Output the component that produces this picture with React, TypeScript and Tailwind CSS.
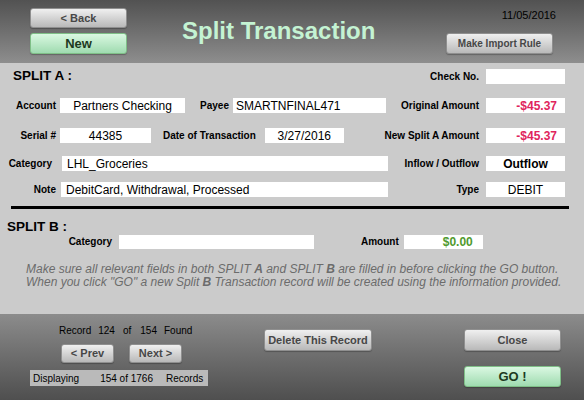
import React from "react";

const grayBtn =
  "flex items-center justify-center rounded-[3px] border border-[#8f8f8f] bg-gradient-to-b from-[#f0f0f0] to-[#b9b9b9] font-bold text-[#474747] shadow-[0_1px_1px_rgba(0,0,0,0.25)]";
const greenBtn =
  "flex items-center justify-center rounded-[3px] border border-[#7fbf87] bg-gradient-to-b from-[#daf8e2] to-[#9fdbb0] font-bold text-[#1d3a1f] shadow-[0_1px_1px_rgba(0,0,0,0.25)]";

const Label = ({ children, w, ml }: { children: React.ReactNode; w?: string; ml?: string }) => (
  <span className={`text-[10px] font-bold text-black whitespace-nowrap text-right ${w ?? ""} ${ml ?? ""}`}>
    {children}
  </span>
);

const Field = ({ className, children }: { className: string; children?: React.ReactNode }) => (
  <div className={`h-[15px] bg-white flex items-center text-[12px] leading-none whitespace-nowrap overflow-hidden ${className}`}>
    {children}
  </div>
);

const RightPair = ({ label, children, valueClass }: { label: string; children?: React.ReactNode; valueClass?: string }) => (
  <div className="ml-auto flex items-center">
    <Label>{label}</Label>
    <Field className={`ml-[7px] w-[79px] ${valueClass ?? "text-black"}`}>{children}</Field>
  </div>
);

export default function App() {
  return (
    <div className="w-[584px] h-[400px] flex flex-col font-['Liberation_Sans',Arial,Helvetica,sans-serif] overflow-hidden">
      {/* header */}
      <div className="h-[63px] flex bg-gradient-to-b from-[#525252] to-[#8e8e8e]">
        <div className="pl-[30px] pt-[8px] flex flex-col gap-[5px]">
          <button className={`${grayBtn} w-[97px] h-[20px] text-[11px]`}>&lt; Back</button>
          <button className={`${greenBtn} w-[97px] h-[21px] text-[13px]`}>New</button>
        </div>
        <div className="pl-[55px] pt-[17px] text-[24px] font-bold text-[#c4f3d3] leading-[28px] whitespace-nowrap">
          Split Transaction
        </div>
        <div className="ml-auto pr-[28px] pt-[8px] flex flex-col items-end">
          <div className="text-[11px] leading-[14px] text-black">11/05/2016</div>
          <button className={`${grayBtn} mt-[11px] mr-[3px] w-[107px] h-[21px] text-[10px]`}>Make Import Rule</button>
        </div>
      </div>

      {/* body */}
      <div className="h-[251px] bg-[#cbcbcb] flex flex-col pt-[6px]">
        <div className="h-[15px] flex items-center pr-[19px]">
          <span className="ml-[13px] text-[13.5px] font-bold text-black">SPLIT A :</span>
          <RightPair label="Check No." />
        </div>

        <div className="mt-[14px] h-[15px] flex items-center pr-[19px]">
          <Label w="w-[56px]">Account</Label>
          <Field className="ml-[4px] w-[125px] justify-center text-black">Partners Checking</Field>
          <Label w="w-[39px]" ml="ml-[5px]">Payee</Label>
          <Field className="ml-[4px] w-[153px] pl-[3px] text-black">SMARTNFINAL471</Field>
          <RightPair label="Original Amount" valueClass="justify-end pr-[8px] font-bold text-[#e0245c]">
            -$45.37
          </RightPair>
        </div>

        <div className="mt-[15px] h-[15px] flex items-center pr-[19px]">
          <Label w="w-[56px]">Serial #</Label>
          <Field className="ml-[4px] w-[91px] justify-center text-black">44385</Field>
          <Label ml="ml-[12px]">Date of Transaction</Label>
          <Field className="ml-[9px] w-[79px] justify-center text-black">3/27/2016</Field>
          <RightPair label="New Split A Amount" valueClass="justify-end pr-[8px] font-bold text-[#e0245c]">
            -$45.37
          </RightPair>
        </div>

        <div className="mt-[13px] h-[15px] flex items-center pr-[19px]">
          <Label w="w-[52px]">Category</Label>
          <Field className="ml-[10px] w-[326px] pl-[5px] text-black">LHL_Groceries</Field>
          <RightPair label="Inflow / Outflow" valueClass="justify-center font-bold text-[11.5px] text-black">
            Outflow
          </RightPair>
        </div>

        <div className="mt-[11px] h-[15px] flex items-center pr-[19px]">
          <Label w="w-[56px]">Note</Label>
          <Field className="ml-[5px] w-[327px] pl-[5px] text-black">DebitCard, Withdrawal, Processed</Field>
          <RightPair label="Type" valueClass="justify-center text-black">
            DEBIT
          </RightPair>
        </div>

        <div className="mt-[9px] ml-[11px] w-[558px] h-[2.5px] bg-black" />

        <div className="mt-[10px] ml-[7px] h-[16px] leading-[16px] text-[13.5px] font-bold text-black">SPLIT B :</div>
        <div className="h-[14px] flex items-center">
          <Label w="w-[112px]">Category</Label>
          <div className="ml-[7px] w-[195px] h-[14px] bg-white" />
          <Label ml="ml-[47px]">Amount</Label>
          <div className="ml-[5px] w-[79px] h-[14px] bg-white flex items-center justify-end pr-[10px] text-[12px] font-bold text-[#4f9a2e]">
            $0.00
          </div>
        </div>

        <div className="mt-[14px] pl-[26px] text-[12px] leading-[13px] italic text-[#6c6c6c] whitespace-nowrap">
          Make sure all relevant fields in both SPLIT <b>A</b> and SPLIT <b>B</b> are filled in before clicking the GO button.
          <br />
          When you click "GO" a new Split <b>B</b> Transaction record will be created using the information provided.
        </div>
      </div>

      {/* footer */}
      <div className="h-[86px] flex bg-gradient-to-b from-[#8c8c8c] to-[#4f4f4f]">
        <div className="pl-[30px] pt-[10px] flex flex-col w-[264px] shrink-0">
          <div className="h-[13px] flex items-center text-[10px] text-black whitespace-nowrap">
            <span className="ml-[29px]">Record</span>
            <span className="ml-[7px]">124</span>
            <span className="ml-[8px]">of</span>
            <span className="ml-[9px]">154</span>
            <span className="ml-[7px]">Found</span>
          </div>
          <div className="mt-[7px] flex pl-[31px] gap-[15px]">
            <button className={`${grayBtn} w-[53px] h-[19px] text-[11px]`}>&lt; Prev</button>
            <button className={`${grayBtn} w-[53px] h-[19px] text-[11px]`}>Next &gt;</button>
          </div>
          <div className="mt-[7px] w-[178px] h-[16px] bg-[#bababa] flex items-center text-[10px] text-black whitespace-nowrap">
            <span className="ml-[3px]">Displaying</span>
            <span className="ml-[21px]">154 of 1766</span>
            <span className="ml-[13px]">Records</span>
          </div>
        </div>
        <div className="pt-[15px]">
          <button className={`${grayBtn} w-[108px] h-[22px] text-[11px]`}>Delete This Record</button>
        </div>
        <div className="ml-auto pr-[23px] pt-[15px] flex flex-col gap-[15px]">
          <button className={`${grayBtn} w-[97px] h-[22px] text-[11px]`}>Close</button>
          <button className={`${greenBtn} w-[97px] h-[21px] text-[13px]`}>GO !</button>
        </div>
      </div>
    </div>
  );
}
